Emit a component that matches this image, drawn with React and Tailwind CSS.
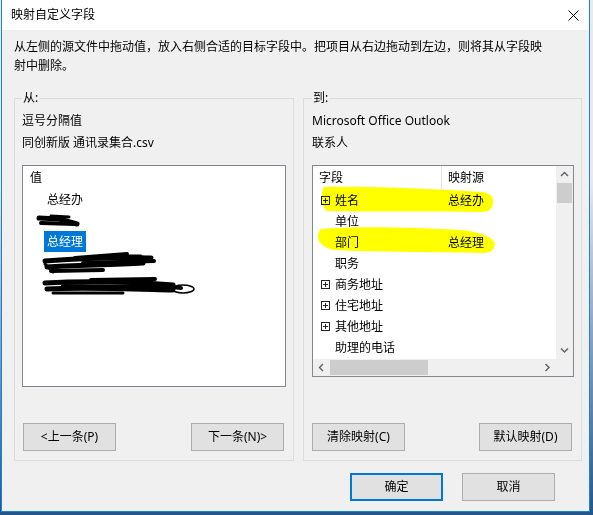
import React from "react";

const FONT = "font-['Noto_Sans','Noto_Sans_CJK_SC',sans-serif]";

const fields = [
  { name: "姓名", plus: true, source: "总经办" },
  { name: "单位" },
  { name: "部门", source: "总经理" },
  { name: "职务" },
  { name: "商务地址", plus: true },
  { name: "住宅地址", plus: true },
  { name: "其他地址", plus: true },
  { name: "助理的电话" },
];

// source values, blanks are the rows that got scribbled out
const values = ["总经办", "", "总经理", "", ""];

const PlusBox = () => (
  <svg width="9" height="9" viewBox="0 0 9 9" className="shrink-0">
    <rect x="0.5" y="0.5" width="8" height="8" fill="white" stroke="#222" />
    <path d="M2 4.5H7M4.5 2V7" stroke="#222" />
  </svg>
);

const Chevron = ({ dir }) => {
  const d = {
    up: "M1 5L4.5 1.5L8 5",
    down: "M1 1.5L4.5 5L8 1.5",
    left: "M5 1L1.5 4.5L5 8",
    right: "M1.5 1L5 4.5L1.5 8",
  }[dir];
  const vertical = dir === "up" || dir === "down";
  return (
    <svg
      width={vertical ? 9 : 7}
      height={vertical ? 7 : 9}
      viewBox={vertical ? "0 0 9 7" : "0 0 7 9"}
    >
      <path d={d} fill="none" stroke="#606060" strokeWidth="1.4" />
    </svg>
  );
};

const Button = ({ children, primary }) => (
  <button
    className={
      primary
        ? "w-[93px] h-[28px] bg-[#e1e1e1] border-2 border-[#0078d7] text-[12px] text-black flex items-center justify-center"
        : "w-[93px] h-[28px] bg-[#e1e1e1] border border-[#adadad] text-[12px] text-black flex items-center justify-center"
    }
  >
    {children}
  </button>
);

const SourceList = () => (
  <div className="relative w-[264px] h-[222px] border border-[#828790] bg-white">
    <div className="h-[23px] leading-[23px] pl-[7px]">值</div>
    {values.map((v, i) => (
      <div key={i} className="h-[21px] flex items-center pl-[21px]">
        {i === 2 ? (
          <span className="h-[21px] leading-[21px] px-[3px] bg-[#0078d7] text-white">{v}</span>
        ) : (
          <span className="px-[3px] leading-[21px]">{v}</span>
        )}
      </div>
    ))}
    {/* pen scribbles over the hidden entries */}
    <svg
      className="absolute inset-0 pointer-events-none"
      width="262"
      height="220"
      viewBox="0 0 262 220"
      fill="none"
      stroke="#000"
      strokeLinecap="round"
      strokeLinejoin="round"
    >
      <path d="M16 52 L36 53 L54 58" strokeWidth="5" />
      <path d="M18 57 L52 58" strokeWidth="4" />
      <path d="M28 50 L46 51" strokeWidth="3" />

      <path d="M22 95 C50 93 90 91 128 92" strokeWidth="5" />
      <path d="M24 101 C50 99 85 99 120 97" strokeWidth="5" />
      <path d="M52 92 L104 88" strokeWidth="4" />
      <path d="M28 105 L80 104" strokeWidth="4" />
      <path d="M60 97 L131 95" strokeWidth="4" />
      <path d="M80 90 L118 90" strokeWidth="3" />
      <path d="M22 98 L30 106" strokeWidth="3" />

      <path d="M22 117 C60 115 110 116 150 119" strokeWidth="5" />
      <path d="M24 123 C60 121 110 123 150 124" strokeWidth="5" />
      <path d="M68 114 L132 113" strokeWidth="4" />
      <path d="M30 127 L100 127" strokeWidth="3" />
      <path d="M105 116 L158 122" strokeWidth="4" />
      <path d="M40 120 L140 121" strokeWidth="4" />
      <ellipse cx="160" cy="123" rx="11" ry="4" strokeWidth="1.5" />
    </svg>
  </div>
);

const FieldList = () => (
  <div className="w-[262px] h-[212px] border border-[#828790] bg-white grid grid-cols-[1fr_17px] grid-rows-[1fr_17px]">
    <div className="relative overflow-hidden">
      <div className="flex h-[24px] items-center">
        <div className="w-[129px] h-full pl-[6px] leading-[24px] border-r border-[#e5e5e5]">字段</div>
        <div className="pl-[6px]">映射源</div>
      </div>
      {fields.map((f) => (
        <div key={f.name} className="flex h-[21px] items-center">
          <div className="w-[129px] flex items-center pl-[8px]">
            {f.plus ? <PlusBox /> : <span className="w-[9px] shrink-0" />}
            <span className="ml-[5px] leading-[21px]">{f.name}</span>
          </div>
          <div className="pl-[6px] leading-[21px]">{f.source}</div>
        </div>
      ))}
      {/* highlighter marks */}
      <svg
        className="absolute inset-0 pointer-events-none mix-blend-multiply"
        width="243"
        height="193"
        viewBox="0 0 243 193"
      >
        <path
          d="M11 21 C40 20 110 22 170 26 Q181 28 180 37 Q179 46 170 46 C120 45 60 46 13 45 Q8 38 9 29 Q9 22 11 21 Z"
          fill="#ffff00"
        />
        <path
          d="M8 63 C40 60 100 61 150 64 Q179 68 182 78 Q181 87 170 87 C120 86 60 86 20 84 Q6 80 5 72 Q5 65 8 63 Z"
          fill="#ffff00"
        />
      </svg>
    </div>
    <div className="bg-[#f0f0f0] flex flex-col">
      <div className="h-[17px] flex items-center justify-center">
        <Chevron dir="up" />
      </div>
      <div className="h-[20px] mx-[1px] bg-[#cdcdcd]" />
      <div className="flex-1" />
      <div className="h-[17px] flex items-center justify-center">
        <Chevron dir="down" />
      </div>
    </div>
    <div className="bg-[#f0f0f0] flex">
      <div className="w-[17px] flex items-center justify-center">
        <Chevron dir="left" />
      </div>
      <div className="w-[98px] my-[1px] bg-[#cdcdcd]" />
      <div className="flex-1" />
      <div className="w-[17px] flex items-center justify-center">
        <Chevron dir="right" />
      </div>
    </div>
    <div className="bg-[#f0f0f0]" />
  </div>
);

export default function App() {
  return (
    <div
      className={`w-[593px] h-[515px] overflow-hidden flex bg-linear-to-b from-[#e9e9e9] from-35% to-[#24558a] text-[12px] text-black ${FONT}`}
    >
      <div className="ml-[1px] w-[589px] h-[512px] border-l border-r border-b border-[#1883d7] bg-[#f0f0f0] flex flex-col">
        {/* title bar */}
        <div className="h-[30px] shrink-0 bg-white flex items-center justify-between pl-[9px] pr-[10px]">
          <span>映射自定义字段</span>
          <svg width="11" height="11" viewBox="0 0 11 11">
            <path d="M0.5 0.5L10.5 10.5M10.5 0.5L0.5 10.5" stroke="#000" strokeWidth="1" />
          </svg>
        </div>

        <p className="mt-[7px] pl-[12px] leading-[19px]">
          从左侧的源文件中拖动值，放入右侧合适的目标字段中。把项目从右边拖动到左边，则将其从字段映
          <br />
          射中删除。
        </p>

        <div className="mt-[15px] pl-[12px] flex gap-[9px]">
          <fieldset className="w-[280px] min-w-0 border border-[#dcdcdc] pl-[7px] pr-[7px] pb-[9px]">
            <legend className="px-[1px] leading-[16px]">从:</legend>
            <div className="mt-[4px] leading-[22px]">逗号分隔值</div>
            <div className="leading-[22px]">同创新版 通讯录集合.csv</div>
            <div className="mt-[11px]">
              <SourceList />
            </div>
            <div className="mt-[36px] flex justify-between pl-[1px] pr-[2px]">
              <Button>&lt;上一条(P)</Button>
              <Button>下一条(N)&gt;</Button>
            </div>
          </fieldset>

          <fieldset className="w-[279px] min-w-0 border border-[#dcdcdc] pl-[8px] pr-[7px] pb-[9px]">
            <legend className="px-[1px] leading-[16px]">到:</legend>
            <div className="mt-[4px] leading-[22px]">Microsoft Office Outlook</div>
            <div className="leading-[22px]">联系人</div>
            <div className="mt-[11px]">
              <FieldList />
            </div>
            <div className="mt-[46px] flex justify-between pr-[2px]">
              <Button>清除映射(C)</Button>
              <Button>默认映射(D)</Button>
            </div>
          </fieldset>
        </div>

        <div className="mt-[12px] flex justify-end gap-[19px] pr-[34px]">
          <Button primary>确定</Button>
          <Button>取消</Button>
        </div>
      </div>
    </div>
  );
}
